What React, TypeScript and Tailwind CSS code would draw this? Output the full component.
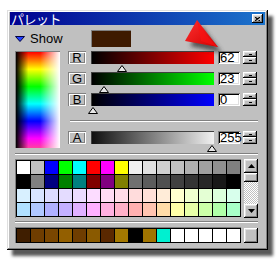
import React from "react";

const raised =
  "shadow-[inset_-1px_-1px_#000,inset_1px_1px_#fff,inset_-2px_-2px_#808080,inset_2px_2px_#dfdfdf]";
const sunken =
  "shadow-[inset_1px_1px_#808080,inset_-1px_-1px_#fff,inset_2px_2px_#000,inset_-2px_-2px_#dfdfdf]";
const etched =
  "shadow-[inset_1px_1px_#808080,inset_-1px_-1px_#fff,inset_2px_2px_#fff,inset_-2px_-2px_#808080]";

const rows: string[][] = [
  ["#ffffff", "#c0c0c0", "#0000ff", "#00ff00", "#00ffff", "#ff0000", "#ff00ff", "#ffff00", "#f0f0f0", "#e0e0e0", "#d0d0d0", "#c0c0c0", "#b0b0b0", "#a0a0a0", "#909090", "#808080"],
  ["#000000", "#808080", "#000080", "#008000", "#008080", "#800000", "#800080", "#808000", "#707070", "#5c5c5c", "#505050", "#404040", "#343434", "#282828", "#181818", "#000000"],
  ["#d8f0ff", "#d8e4ff", "#dcdcff", "#e4dcff", "#ecdcff", "#fcdcff", "#ffdcf4", "#ffdce8", "#ffdcdc", "#ffe0d8", "#ffecd8", "#ffffd0", "#f0ffd0", "#e4ffd4", "#dcffdc", "#d8ffec"],
  ["#b0e0ff", "#b0c8ff", "#b0b0ff", "#c4b0ff", "#e0b0ff", "#ffb0ff", "#ffb0e0", "#ffb0c8", "#ffb0b0", "#ffc4b0", "#ffdca8", "#ffffa8", "#e8ffa8", "#ccffa8", "#b0ffa8", "#a8ffc8"],
];

const bottom = ["#3f1e00", "#6f3d00", "#7a4600", "#935f00", "#6f3d00", "#8a5a00", "#5a2800", "#a37800", "#000000", "#a07400", "#00f0d0", "#ffffff", "#ffffff", "#ffffff", "#ffffff", "#ffffff"];

const sliders = [
  { label: "R", value: 62, grad: "bg-[linear-gradient(to_right,#000,#ff0000)]", text: "62" },
  { label: "G", value: 23, grad: "bg-[linear-gradient(to_right,#000,#00ff00)]", text: "23" },
  { label: "B", value: 0, grad: "bg-[linear-gradient(to_right,#000,#0000ff)]", text: "0" },
];

function Spinner() {
  return (
    <div className="w-[14px] h-[13px] flex flex-col">
      <div className={`h-[6px] bg-[#c0c0c0] ${raised} flex items-center justify-center`}>
        <div className="w-[3px] h-[1px] bg-black" />
      </div>
      <div className={`h-[7px] bg-[#c0c0c0] ${raised} flex items-center justify-center`}>
        <div className="w-[3px] h-[1px] bg-black" />
      </div>
    </div>
  );
}

function Marker({ value }: { value: number }) {
  const left = Math.round((value / 255) * 119) - 4;
  return (
    <svg className="absolute top-[13px]" style={{ left }} width="10" height="7" viewBox="0 0 10 7">
      <polygon points="5,0.5 9.5,6.5 0.5,6.5" fill="#e8e8e8" stroke="#000" strokeWidth="1" />
    </svg>
  );
}

function SliderRow({ label, value, grad, text, caret }: { label: string; value: number; grad: string; text: string; caret?: boolean }) {
  return (
    <div className="flex h-[13px] items-stretch">
      <div className={`w-[18px] bg-[#c0c0c0] ${etched} flex items-center justify-center text-[13px] leading-none text-black`}>
        {label}
      </div>
      <div className={`relative ml-[5px] w-[123px] ${grad} border-t border-l border-[#404040] border-b-white border-r-white`}>
        <Marker value={value} />
      </div>
      <div className={`ml-[4px] w-[22px] bg-white ${sunken} flex items-center pl-[2px] text-[13px] leading-none text-black`}>
        {text}
        {caret && <span className="w-[1px] h-[11px] bg-black ml-[1px]" />}
      </div>
      <div className="ml-[3px]">
        <Spinner />
      </div>
    </div>
  );
}

function Cells({ colors }: { colors: string[] }) {
  return (
    <div className="grid grid-cols-[repeat(16,13px)] gap-[1px] bg-black p-[1px]">
      {colors.map((c, i) => (
        <div key={i} className="h-[13px]" style={{ backgroundColor: c }} />
      ))}
    </div>
  );
}

export default function App() {
  return (
    <div
      className="relative w-[280px] h-[264px] bg-white pt-[10px] pl-[7px] overflow-hidden"
      style={{ fontFamily: '"Liberation Sans", Arial, sans-serif' }}
    >
      <div className="w-[261px] h-[240px] bg-[#c0c0c0] px-[3px] pt-[2px] flex flex-col shadow-[inset_-1px_-1px_#000,inset_1px_1px_#dfdfdf,inset_-2px_-2px_#808080,inset_2px_2px_#fff,5px_6px_3px_rgba(0,0,0,0.65)]">
        {/* title bar */}
        <div className="h-[13px] flex items-center justify-between bg-[linear-gradient(to_right,#000090,#1c74cc)] pl-[1px] pr-[2px]">
          <span
            className="text-white text-[13px] leading-[13px] tracking-[-0.5px]"
            style={{ fontFamily: '"Noto Sans CJK JP", "Noto Sans", sans-serif' }}
          >
            パレット
          </span>
          <div className={`w-[11px] h-[9px] bg-[#c0c0c0] ${raised} flex items-center justify-center`}>
            <svg width="5" height="4" viewBox="0 0 5 4">
              <path d="M0 0L5 4M5 0L0 4" stroke="#000" strokeWidth="1.1" />
            </svg>
          </div>
        </div>

        {/* Show row */}
        <div className="mt-[5px] h-[17px] flex items-center pl-[5px]">
          <div className="w-[76px] flex items-center">
            <svg width="10" height="6" viewBox="0 0 10 6">
              <polygon points="0.5,0.5 9.5,0.5 5,5.5" fill="#2040ff" stroke="#000040" strokeWidth="1" />
            </svg>
            <span className="ml-[5px] text-[13px] leading-none text-black">Show</span>
          </div>
          <div className="w-[40px] h-[17px] bg-[#3e1a00] border-t border-l border-[#808080] border-b-white border-r-white" />
        </div>

        {/* main section */}
        <div className="mt-[4px] h-[97px] flex pl-[5px]">
          <div className="w-[45px] h-[97px] border-l border-t border-[#808080] bg-[linear-gradient(to_right,#000_0%,rgba(0,0,0,0)_28%,rgba(255,255,255,0)_55%,#fff_100%),linear-gradient(to_bottom,#ff0000_0%,#ffff00_18%,#00ff00_36%,#00ffff_54%,#0000ff_72%,#ff00ff_90%,#ff40a0_100%)]" />
          <div className="ml-[8px] flex flex-col">
            {sliders.map((s, i) => (
              <div key={s.label} className={i > 0 ? "mt-[8px]" : ""}>
                <SliderRow label={s.label} value={s.value} grad={s.grad} text={s.text} />
              </div>
            ))}
            <div className="mt-[14px] ml-[2px] w-[188px] h-[2px] border-t border-[#808080] border-b border-b-white" />
            <div className="mt-[9px]">
              <SliderRow label="A" value={255} grad="bg-[linear-gradient(to_right,#101010,#f0f0f0)]" text="255" caret />
            </div>
          </div>
        </div>

        {/* separator */}
        <div className="mt-[5px] ml-[5px] w-[243px] h-[2px] border-t border-[#808080] border-b border-b-white" />

        {/* grid + scrollbar */}
        <div className="mt-[4px] flex pl-[5px]">
          <div className="border-t border-l border-[#808080] border-b-white border-r-white">
            <Cells colors={rows.flat()} />
          </div>
          <div className="ml-[3px] w-[14px] h-[59px] flex flex-col">
            <div className={`h-[14px] bg-[#c0c0c0] ${raised} flex items-center justify-center`}>
              <svg width="7" height="4" viewBox="0 0 7 4">
                <polygon points="3.5,0 7,4 0,4" fill="#000" />
              </svg>
            </div>
            <div className={`h-[9px] bg-[#c0c0c0] ${raised}`} />
            <div className="flex-1 bg-[repeating-conic-gradient(#ffffff_0_25%,#c0c0c0_0_50%)] bg-[length:2px_2px]" />
            <div className={`h-[14px] bg-[#c0c0c0] ${raised} flex items-center justify-center`}>
              <svg width="7" height="4" viewBox="0 0 7 4">
                <polygon points="0,0 7,0 3.5,4" fill="#000" />
              </svg>
            </div>
          </div>
        </div>

        {/* separator */}
        <div className="mt-[3px] ml-[5px] w-[243px] h-[2px] border-t border-[#808080] border-b border-b-white" />

        {/* bottom row */}
        <div className="mt-[4px] flex pl-[5px]">
          <div className="border-t border-l border-[#808080] border-b-white border-r-white">
            <Cells colors={bottom} />
          </div>
          <div className={`ml-[3px] mt-[1px] w-[14px] h-[15px] bg-[#c0c0c0] ${raised}`} />
        </div>
      </div>

      {/* red pointer arrow */}
      <svg className="absolute left-[180px] top-[13px]" width="50" height="46" viewBox="0 0 50 46">
        <defs>
          <filter id="blur" x="-30%" y="-30%" width="160%" height="160%">
            <feGaussianBlur stdDeviation="2" />
          </filter>
          <linearGradient id="rg" x1="0" y1="0" x2="1" y2="1">
            <stop offset="0" stopColor="#ff3030" />
            <stop offset="1" stopColor="#d00000" />
          </linearGradient>
        </defs>
        <polygon points="22,13 10,33 42,40" fill="#303030" opacity="0.75" filter="url(#blur)" />
        <polygon points="17,7 5,28 38,34" fill="url(#rg)" />
        <polygon points="17,7 26,22 38,34 21,28" fill="#ff1010" opacity="0.6" />
      </svg>
    </div>
  );
}
